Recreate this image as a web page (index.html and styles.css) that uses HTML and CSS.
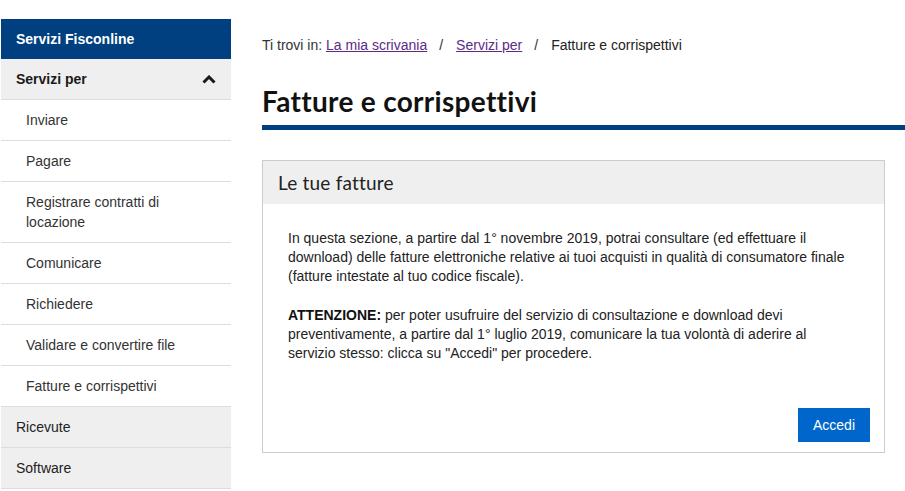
FILE: index.html
```html
<!DOCTYPE html>
<html lang="it">
<head>
<meta charset="utf-8">
<title>Fatture e corrispettivi</title>
<link rel="stylesheet" href="styles.css">
</head>
<body>
<div class="page">
  <nav class="sidebar">
    <div class="side-title">Servizi Fisconline</div>
    <div class="side-group">
      <span>Servizi per</span>
      <svg class="chev" width="14" height="9" viewBox="0 0 14 9"><path d="M1.5 7.5 L7 2 L12.5 7.5" fill="none" stroke="#1a1a1a" stroke-width="3"/></svg>
    </div>
    <ul class="side-sub">
      <li>Inviare</li>
      <li>Pagare</li>
      <li>Registrare contratti di locazione</li>
      <li>Comunicare</li>
      <li>Richiedere</li>
      <li>Validare e convertire file</li>
      <li>Fatture e corrispettivi</li>
    </ul>
    <div class="side-item">Ricevute</div>
    <div class="side-item">Software</div>
  </nav>
  <main class="main">
    <div class="breadcrumb">Ti trovi in: <a href="#">La mia scrivania</a><span class="sep">/</span><a href="#">Servizi per</a><span class="sep">/</span><span class="current">Fatture e corrispettivi</span></div>
    <h1 class="title">Fatture e corrispettivi</h1>
    <section class="card">
      <div class="card-head">Le tue fatture</div>
      <div class="card-body">
        <p>In questa sezione, a partire dal 1° novembre 2019, potrai consultare (ed effettuare il download) delle fatture elettroniche relative ai tuoi acquisti in qualità di consumatore finale (fatture intestate al tuo codice fiscale).</p>
        <p><strong>ATTENZIONE:</strong> per poter usufruire del servizio di consultazione e download devi preventivamente, a partire dal 1° luglio 2019, comunicare la tua volontà di aderire al servizio stesso: clicca su "Accedi" per procedere.</p>
      </div>
      <div class="card-foot"><button class="btn">Accedi</button></div>
    </section>
  </main>
</div>
</body>
</html>
```

FILE: styles.css
```css
* { box-sizing: border-box; }
html, body { margin: 0; padding: 0; background: #fff; }
body {
  font-family: "Liberation Sans", Arial, sans-serif;
  font-size: 14px;
  color: #333;
}
.page {
  display: flex;
  align-items: flex-start;
  padding-top: 19px;
  padding-left: 1px;
}
.sidebar {
  width: 230px;
  flex: none;
}
.side-title {
  background: #003f80;
  color: #fff;
  font-weight: bold;
  height: 40px;
  line-height: 40px;
  padding-left: 15px;
}
.side-group {
  display: flex;
  align-items: center;
  justify-content: space-between;
  background: #efefef;
  height: 41px;
  padding: 0 15px 0 15px;
  border-bottom: 1px solid #ddd;
  font-weight: bold;
  color: #1a1a1a;
}
.chev { display: block; }
.side-sub {
  list-style: none;
  margin: 0;
  padding: 0;
}
.side-sub li {
  padding: 10px 40px 10px 25px;
  line-height: 20px;
  border-bottom: 1px solid #ddd;
  color: #333;
}
.side-item {
  background: #efefef;
  padding: 10px 15px;
  line-height: 20px;
  border-bottom: 1px solid #ddd;
  color: #222;
}
.main {
  flex: 1;
  margin-left: 31px;
  padding-top: 16px;
}
.breadcrumb {
  line-height: 20px;
  color: #333;
}
.breadcrumb a {
  color: #5b2a86;
  text-decoration: underline;
}
.breadcrumb .sep {
  margin: 0 13px 0 12px;
}
.breadcrumb .current { color: #222; }
.title {
  margin: 29px 0 0 0;
  font-family: "Lato", "Liberation Sans", sans-serif;
  font-weight: bold;
  font-size: 28px;
  line-height: 34px;
  letter-spacing: 0.3px;
  color: #111;
  padding-bottom: 7px;
  border-bottom: 5px solid #003f80;
}
.card {
  margin: 30px 20px 0 0;
  border: 1px solid #ccc;
}
.card-head {
  background: #efefef;
  height: 43px;
  line-height: 43px;
  padding-left: 15px;
  font-family: "Lato", "Liberation Sans", sans-serif;
  font-size: 19px;
  letter-spacing: 0.2px;
  color: #222;
}
.card-body {
  padding: 25px 34px 0 25px;
}
.card-body p {
  margin: 0 0 20px 0;
  line-height: 19px;
  color: #222;
}
.card-body p:last-child { margin-bottom: 0; }
.card-body strong { color: #111; }
.card-foot {
  display: flex;
  justify-content: flex-end;
  padding: 45px 14px 10px 0;
}
.btn {
  background: #0066cc;
  color: #fff;
  border: 0;
  width: 72px;
  height: 34px;
  font-family: "Liberation Sans", Arial, sans-serif;
  font-size: 14px;
  padding: 0;
}
```
